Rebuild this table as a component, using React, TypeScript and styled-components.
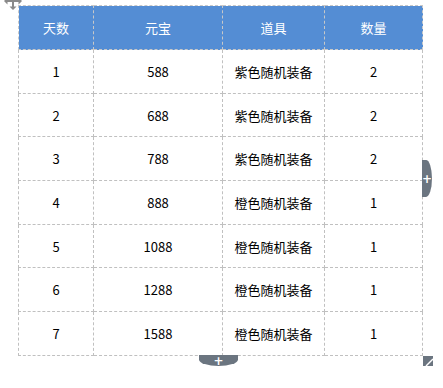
import React from "react";
import styled, { createGlobalStyle } from "styled-components";

const rows = [
  { day: 1, gold: 588, item: "紫色随机装备", count: 2 },
  { day: 2, gold: 688, item: "紫色随机装备", count: 2 },
  { day: 3, gold: 788, item: "紫色随机装备", count: 2 },
  { day: 4, gold: 888, item: "橙色随机装备", count: 1 },
  { day: 5, gold: 1088, item: "橙色随机装备", count: 1 },
  { day: 6, gold: 1288, item: "橙色随机装备", count: 1 },
  { day: 7, gold: 1588, item: "橙色随机装备", count: 1 },
];

const App = () => {
  return (
    <Page>
      <GlobalStyle />
      <Frame>
        <MoveHandle width="18" height="18" viewBox="0 0 18 18">
          <path
            d="M9 0 L12.5 3.5 L5.5 3.5 Z M9 18 L12.5 14.5 L5.5 14.5 Z M0 9 L3.5 5.5 L3.5 12.5 Z M18 9 L14.5 5.5 L14.5 12.5 Z"
            fill="#8a8a8a"
          />
          <rect x="8" y="3" width="2" height="12" fill="#8a8a8a" />
          <rect x="3" y="8" width="12" height="2" fill="#8a8a8a" />
        </MoveHandle>
        <Table>
          <colgroup>
            <col style={{ width: 75 }} />
            <col style={{ width: 129 }} />
            <col style={{ width: 102 }} />
            <col style={{ width: 98 }} />
          </colgroup>
          <thead>
            <tr>
              <Th>天数</Th>
              <Th>元宝</Th>
              <Th>道具</Th>
              <Th>数量</Th>
            </tr>
          </thead>
          <tbody>
            {rows.map((r) => (
              <tr key={r.day}>
                <Td>{r.day}</Td>
                <Td>{r.gold}</Td>
                <Td>{r.item}</Td>
                <Td>{r.count}</Td>
              </tr>
            ))}
          </tbody>
        </Table>
        <SideTab>
          <Plus>+</Plus>
        </SideTab>
        <BottomTab>
          <Plus>+</Plus>
        </BottomTab>
        <ResizeHandle width="10" height="10" viewBox="0 0 10 10">
          <path d="M0 0 H10 V10 H0 Z" fill="#6b7580" />
          <path d="M3 10 L10 3" stroke="#fff" strokeWidth="1.4" />
        </ResizeHandle>
      </Frame>
    </Page>
  );
};

export default App;

const GlobalStyle = createGlobalStyle`
  html, body {
    margin: 0;
    min-height: 100%;
    background: #fff;
    font-family: "Noto Sans CJK SC", "Noto Sans", sans-serif;
  }
`;

const Page = styled.div`
  min-height: 388px;
  box-sizing: border-box;
  padding: 5px 0 0 18px;
`;

const Frame = styled.div`
  position: relative;
  width: 405px;
`;

const Table = styled.table`
  width: 405px;
  table-layout: fixed;
  border-collapse: collapse;
  font-size: 13px;
`;

const Th = styled.th`
  height: 43px;
  padding: 0;
  background: #548dd4;
  color: #fff;
  font-weight: normal;
  text-align: center;
  border: 1px dashed #c8c8c8;
`;

const Td = styled.td`
  height: 42.7px;
  padding: 0;
  color: #000;
  text-align: center;
  border: 1px dashed #c0c0c0;
`;

const MoveHandle = styled.svg`
  position: absolute;
  top: -13px;
  left: -14px;
`;

const SideTab = styled.div`
  position: absolute;
  left: 404px;
  top: 155px;
  width: 10px;
  height: 37px;
  background: #6b7580;
  border-radius: 0 60% 60% 0 / 0 50% 50% 0;
  display: flex;
  align-items: center;
  justify-content: center;
`;

const BottomTab = styled.div`
  position: absolute;
  left: 181px;
  top: 350px;
  width: 39px;
  height: 11px;
  background: #6b7580;
  border-radius: 0 0 50% 50% / 0 0 60% 60%;
  display: flex;
  align-items: center;
  justify-content: center;
`;

const Plus = styled.span`
  color: #fff;
  font-family: "DejaVu Sans", sans-serif;
  font-weight: bold;
  font-size: 12px;
  line-height: 1;
`;

const ResizeHandle = styled.svg`
  position: absolute;
  left: 405px;
  top: 351px;
`;
